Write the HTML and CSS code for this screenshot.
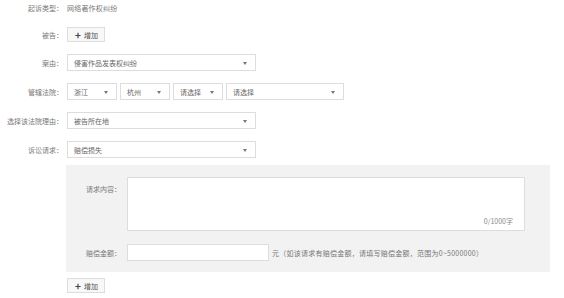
FILE: index.html
```html
<!DOCTYPE html>
<html lang="zh-CN">

<head>
  <meta charset="UTF-8">
  <title>起诉信息</title>
  <link rel="stylesheet" href="styles.css">
</head>

<body>
  <form class="case-form">
    <div class="row row-text">
      <label class="label">起诉类型：</label>
      <span class="value">网络著作权纠纷</span>
    </div>

    <div class="row row-btn">
      <label class="label">被告：</label>
      <button type="button" class="add-btn"><b>+</b> 增加</button>
    </div>

    <div class="row">
      <label class="label">案由：</label>
      <div class="select w-wide"><span>侵害作品发表权纠纷</span><i class="caret"></i></div>
    </div>

    <div class="row">
      <label class="label">管辖法院：</label>
      <div class="select w-small"><span>浙江</span><i class="caret"></i></div>
      <div class="select w-small"><span>杭州</span><i class="caret"></i></div>
      <div class="select w-small"><span>请选择</span><i class="caret"></i></div>
      <div class="select w-mid"><span>请选择</span><i class="caret"></i></div>
    </div>

    <div class="row">
      <label class="label">选择该法院理由：</label>
      <div class="select w-wide"><span>被告所在地</span><i class="caret"></i></div>
    </div>

    <div class="row">
      <label class="label">诉讼请求：</label>
      <div class="select w-wide"><span>赔偿损失</span><i class="caret"></i></div>
    </div>

    <div class="claim-panel">
      <div class="panel-row">
        <label class="panel-label top">请求内容：</label>
        <div class="textarea">
          <span class="counter">0/1000字</span>
        </div>
      </div>
      <div class="panel-row amount-row">
        <label class="panel-label">赔偿金额：</label>
        <div class="input"></div>
        <span class="hint">元（如该请求有赔偿金额，请填写赔偿金额，范围为0~5000000）</span>
      </div>
    </div>

    <div class="row-btn bottom-btn">
      <button type="button" class="add-btn"><b>+</b> 增加</button>
    </div>
  </form>
</body>

</html>
```

FILE: styles.css
```css
body {
  margin: 0;
  background-color: #fff;
  font-family: 'Noto Sans CJK SC', 'Noto Sans', sans-serif;
  font-size: 7px;
  color: #666;
}

.case-form {
  width: 564px;
}

.row {
  display: flex;
  align-items: center;
  gap: 3px;
  height: 17px;
  margin-bottom: 12px;
}

.row-text {
  height: 15px;
}

.row-btn {
  height: 15px;
}

.label {
  width: 63px;
  margin-right: 1px;
  text-align: right;
  white-space: nowrap;
  color: #777;
}

.value {
  color: #777;
  letter-spacing: 0.2px;
}

.add-btn {
  display: flex;
  align-items: center;
  gap: 3px;
  height: 15px;
  width: 38px;
  padding: 0 0 0 7px;
  border: 1px solid #ddd;
  background-color: #f8f8f8;
  font-family: inherit;
  font-size: 7px;
  color: #555;
}

.add-btn b {
  font-size: 10px;
  font-weight: bold;
  line-height: 1;
  color: #444;
}

.select {
  position: relative;
  box-sizing: border-box;
  height: 17px;
  display: flex;
  align-items: center;
  padding-left: 6px;
  border: 1px solid #ddd;
  background-color: #fff;
  color: #666;
}

.w-wide {
  width: 189px;
}

.w-small {
  width: 50px;
}

.w-mid {
  width: 118px;
}

.caret {
  position: absolute;
  right: 8px;
  top: 7px;
  border-left: 2.5px solid transparent;
  border-right: 2.5px solid transparent;
  border-top: 3px solid #777;
}

.claim-panel {
  box-sizing: border-box;
  margin: -5px 0 0 66px;
  width: 484px;
  height: 107px;
  padding: 12px 25px 0 0;
  background-color: #f2f2f2;
}

.panel-row {
  display: flex;
  align-items: center;
}

.panel-label {
  width: 55px;
  margin-right: 6px;
  text-align: right;
  white-space: nowrap;
  color: #777;
}

.panel-label.top {
  align-self: flex-start;
  margin-top: 7px;
}

.textarea {
  position: relative;
  box-sizing: border-box;
  width: 398px;
  height: 54px;
  border: 1px solid #ddd;
  background-color: #fff;
}

.counter {
  position: absolute;
  right: 11px;
  bottom: 4px;
  color: #888;
}

.amount-row {
  margin-top: 13px;
}

.input {
  box-sizing: border-box;
  width: 142px;
  height: 17px;
  border: 1px solid #ddd;
  background-color: #fff;
}

.hint {
  margin-left: 3px;
  white-space: nowrap;
  letter-spacing: 0.25px;
  color: #777;
}

.bottom-btn {
  margin: 6px 0 0 67px;
}
```
